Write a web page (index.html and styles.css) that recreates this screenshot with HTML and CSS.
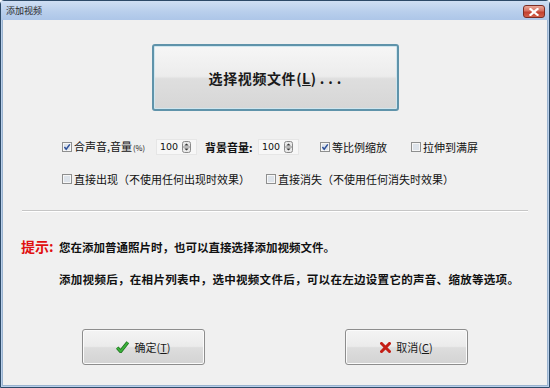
FILE: index.html
```html
<!DOCTYPE html>
<html>
<head>
<meta charset="utf-8">
<link rel="stylesheet" href="styles.css">
</head>
<body>
<div class="window">
  <div class="titlebar">
    <span class="title">添加视频</span>
    <span class="close">
      <svg width="10" height="8" viewBox="0 0 10 8"><path d="M1.5 1 L8.5 7 M8.5 1 L1.5 7" stroke="#fff" stroke-width="2.2" stroke-linecap="square"/></svg>
    </span>
  </div>
  <div class="content">
    <div class="big-row">
      <div class="big-btn">选择视频文件(<u>L</u>)<span class="dots">...</span></div>
    </div>

    <div class="opt-row">
      <span class="chk w-audio">
        <svg class="box" width="10" height="10" viewBox="0 0 10 10"><rect x=".5" y=".5" width="9" height="9" fill="#f6f6f6" stroke="#8e8f8f"/><rect x="2" y="2" width="6" height="6" fill="#dde3ea"/><path d="M2.4 5 L4.2 7.2 L7.8 2.4" fill="none" stroke="#2c4f99" stroke-width="1.5"/></svg>
        <span>合声音,音量<small>(%)</small></span>
      </span>
      <span class="spin">
        <span class="val">100</span>
        <svg width="9" height="12" viewBox="0 0 9 12"><rect x=".5" y=".5" width="8" height="11" rx="2" fill="#e9e9e9" stroke="#8a8a8a"/><path d="M2.3 4.6 L4.5 2.4 L6.7 4.6Z" fill="#333"/><line x1="1" y1="6" x2="8" y2="6" stroke="#8a8a8a"/><path d="M2.3 7.4 L4.5 9.6 L6.7 7.4Z" fill="#333"/></svg>
      </span>
      <span class="bold-lbl">背景音量:</span>
      <span class="spin spin2">
        <span class="val">100</span>
        <svg width="9" height="12" viewBox="0 0 9 12"><rect x=".5" y=".5" width="8" height="11" rx="2" fill="#e9e9e9" stroke="#8a8a8a"/><path d="M2.3 4.6 L4.5 2.4 L6.7 4.6Z" fill="#333"/><line x1="1" y1="6" x2="8" y2="6" stroke="#8a8a8a"/><path d="M2.3 7.4 L4.5 9.6 L6.7 7.4Z" fill="#333"/></svg>
      </span>
      <span class="chk w-ratio">
        <svg class="box" width="10" height="10" viewBox="0 0 10 10"><rect x=".5" y=".5" width="9" height="9" fill="#f6f6f6" stroke="#8e8f8f"/><rect x="2" y="2" width="6" height="6" fill="#dde3ea"/><path d="M2.4 5 L4.2 7.2 L7.8 2.4" fill="none" stroke="#2c4f99" stroke-width="1.5"/></svg>
        <span>等比例缩放</span>
      </span>
      <span class="chk">
        <svg class="box" width="10" height="10" viewBox="0 0 10 10"><rect x=".5" y=".5" width="9" height="9" fill="#f6f6f6" stroke="#8e8f8f"/><rect x="2" y="2" width="6" height="6" fill="#dde3ea"/></svg>
        <span>拉伸到满屏</span>
      </span>
    </div>

    <div class="opt-row row2">
      <span class="chk w-appear">
        <svg class="box" width="10" height="10" viewBox="0 0 10 10"><rect x=".5" y=".5" width="9" height="9" fill="#f6f6f6" stroke="#8e8f8f"/><rect x="2" y="2" width="6" height="6" fill="#dde3ea"/></svg>
        <span>直接出现（不使用任何出现时效果）</span>
      </span>
      <span class="chk">
        <svg class="box" width="10" height="10" viewBox="0 0 10 10"><rect x=".5" y=".5" width="9" height="9" fill="#f6f6f6" stroke="#8e8f8f"/><rect x="2" y="2" width="6" height="6" fill="#dde3ea"/></svg>
        <span>直接消失（不使用任何消失时效果）</span>
      </span>
    </div>

    <div class="sep"></div>

    <div class="tip tip1"><span class="tip-head">提示:</span><span>您在添加普通照片时，也可以直接选择添加视频文件。</span></div>
    <div class="tip tip2">添加视频后，在相片列表中，选中视频文件后，可以在左边设置它的声音、缩放等选项。</div>

    <div class="btn-row">
      <div class="btn">
        <svg width="13" height="12" viewBox="0 0 13 12"><path d="M1.2 6.6 L4.6 10.4 L11.8 1.4" fill="none" stroke="#1c6e1c" stroke-width="3.4" stroke-linejoin="round"/><path d="M1.2 6.6 L4.6 10.4 L11.8 1.4" fill="none" stroke="#3bb03b" stroke-width="2" stroke-linejoin="round"/></svg>
        <span>确定(<u>T</u>)</span>
      </div>
      <div class="btn">
        <svg width="11" height="11" viewBox="0 0 11 11"><path d="M1.5 1.5 L9.5 9.5 M9.5 1.5 L1.5 9.5" stroke="#c41e16" stroke-width="3" stroke-linecap="square"/></svg>
        <span>取消(<u>C</u>)</span>
      </div>
    </div>
  </div>
</div>
</body>
</html>
```

FILE: styles.css
```css
html, body {
  margin: 0;
  padding: 0;
}
body {
  width: 550px;
  height: 388px;
  overflow: hidden;
  font-family: "Noto Sans CJK SC", "DejaVu Sans", sans-serif;
  color: #111;
}
.window {
  box-sizing: border-box;
  width: 550px;
  height: 388px;
  border: 1px solid #2d4a68;
  border-radius: 4px 4px 0 0;
  background: #b9cfea;
  display: flex;
  flex-direction: column;
}
.titlebar {
  height: 19px;
  flex: none;
  display: flex;
  align-items: center;
  justify-content: space-between;
  padding: 0 4px 0 5px;
  background: linear-gradient(#cfdff3, #b9cfec 55%, #adc6e8);
}
.title {
  font-size: 9px;
  line-height: 12px;
  color: #2a2a2a;
  margin-top: 1px;
}
.close {
  box-sizing: border-box;
  width: 22px;
  height: 13px;
  margin-top: 2px;
  border: 1px solid #7b2d24;
  border-radius: 3px;
  background: linear-gradient(#eba899, #d67061 45%, #c2402f 55%, #d3604a);
  display: flex;
  align-items: center;
  justify-content: center;
}
.content {
  flex: 1;
  margin: 0 1px 1px 1px;
  border: 1px solid #9ab3cf;
  border-top: none;
  background: #f0f0f0;
  display: flex;
  flex-direction: column;
}
.big-row {
  display: flex;
  justify-content: center;
  margin-top: 24px;
}
.big-btn {
  box-sizing: border-box;
  width: 247px;
  height: 67px;
  border: 2px solid #5f93aa;
  border-radius: 3px;
  background: linear-gradient(#f6f6f6, #ececec 48%, #dedede 52%, #d6d6d6);
  box-shadow: inset 0 0 0 1px #cfe6ef;
  display: flex;
  align-items: center;
  justify-content: center;
  font-size: 14px;
  font-weight: bold;
  color: #1a1a1a;
  letter-spacing: 0.6px;
  padding-left: 4px;
}
.big-btn .dots {
  letter-spacing: 4px;
  margin-left: 3px;
}
.big-btn u, .btn u {
  text-decoration: underline;
  text-underline-offset: 1px;
}
.opt-row {
  display: flex;
  align-items: center;
  height: 16px;
  margin-top: 28px;
  padding-left: 59px;
  font-size: 11px;
  line-height: 16px;
}
.row2 {
  margin-top: 16px;
}
.chk {
  display: flex;
  align-items: center;
  white-space: nowrap;
}
.chk .box {
  flex: none;
  margin-right: 2px;
}
.chk small {
  font-size: 7.5px;
  margin-left: 1px;
}
.w-audio {
  width: 94px;
}
.spin {
  box-sizing: border-box;
  width: 41px;
  height: 16px;
  display: flex;
  align-items: center;
  justify-content: space-between;
  padding: 0 5px 0 3px;
  font-family: "DejaVu Sans", sans-serif;
  font-size: 9.5px;
  background: #f7f7f7;
  border: 1px solid #e6e6e6;
}
.bold-lbl {
  font-weight: bold;
  margin-left: 8px;
  width: 53px;
  white-space: nowrap;
}
.w-ratio {
  margin-left: 21px;
  width: 91px;
}
.w-appear {
  width: 204px;
}
.sep {
  margin: 23px 19px 0 19px;
  border-top: 1px solid #c6c6c6;
  border-bottom: 1px solid #ffffff;
}
.tip {
  font-size: 11.5px;
  font-weight: bold;
  line-height: 20px;
  white-space: nowrap;
  color: #111;
}
.tip1 {
  margin-top: 24px;
  padding-left: 18px;
  display: flex;
  align-items: baseline;
}
.tip-head {
  color: #e01010;
  font-size: 14px;
  font-weight: bold;
  width: 38px;
}
.tip2 {
  margin-top: 12px;
  padding-left: 56px;
  letter-spacing: 0.3px;
}
.btn-row {
  display: flex;
  margin-top: 40px;
  padding-left: 79px;
  gap: 140px;
}
.btn {
  box-sizing: border-box;
  width: 123px;
  height: 36px;
  border: 1px solid #8d8d8d;
  border-radius: 3px;
  background: linear-gradient(#f4f4f4, #ebebeb 48%, #dddddd 52%, #d3d3d3);
  box-shadow: inset 0 0 0 1px #fbfbfb;
  display: flex;
  align-items: center;
  justify-content: center;
  gap: 5px;
  font-size: 11px;
  color: #1a1a1a;
}
```
